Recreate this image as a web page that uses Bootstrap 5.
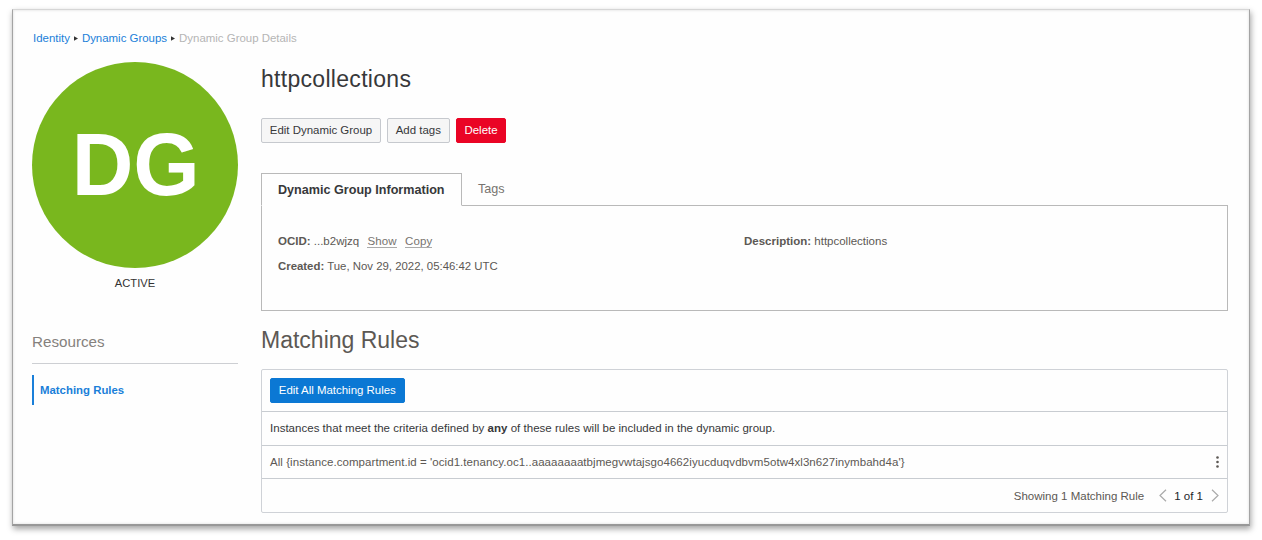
<!DOCTYPE html>
<html lang="en">
<head>
<meta charset="utf-8">
<meta name="viewport" content="width=device-width, initial-scale=1">
<title>Dynamic Group Details</title>
<link rel="stylesheet" href="https://cdn.jsdelivr.net/npm/bootstrap@5.3.0/dist/css/bootstrap.min.css">
<style>
  body { font-family: "Liberation Sans", Arial, sans-serif; font-size: 11.5px; line-height: 16px; color: #5c5854; background: #fff; overflow: hidden; min-height: 100vh; padding: 9px 0 0 12px; }
  a { color: #1a7fd9; text-decoration: none; }
  .frame { width: 1238px; height: 517px; padding: 20px 21px 0 19px; background: #fefefe;
    border: 1px solid #a4a4a4; border-top-color: #d6d6d6; border-bottom: 2px solid #989898;
    box-shadow: 1px 3px 6px rgba(0,0,0,.36), inset 0 0 2px 1px #ececec; }
  .crumbs { height: 16px; font-size: 11.45px; padding-left: 1px; }
  .crumb-dot { width: 12px; display: flex; align-items: center; justify-content: center; }
  .muted-crumb { color: #b5b5b5; }
  .side { width: 206px; padding-top: 16px; }
  .main-col { width: 967px; padding-top: 16px; }
  .avatar { width: 206px; height: 206px; background: #79b71e; color: #fff; font-size: 89px; line-height: 1; font-weight: 700; }
  .avatar span { transform: scaleX(.96); margin: -2px 0 0 2px; }
  .status { color: #333; margin-top: 7px; font-size: 11.2px; }
  .res-title { font-size: 15.2px; line-height: 20px; color: #85817d; margin-top: 41px; padding: 0 0 11px 0; border-bottom: 1px solid #cdcfd3; }
  .res-link { height: 30px; margin-top: 11px; padding-left: 6px; border-left: 2px solid #1a7fd9; font-weight: 700; font-size: 11.4px; }
  h1 { font-size: 23px; line-height: 28px; margin: 3px 0 0; color: #37383a; font-weight: 400; letter-spacing: .3px; }
  h2 { font-size: 23px; line-height: 28px; margin: 15px 0 0; color: #5c5854; font-weight: 400; }
  .actions { margin-top: 25px; gap: 6px; }
  .btn { --bs-btn-font-size: 11.45px; --bs-btn-line-height: 16px; --bs-btn-padding-x: 7.8px; --bs-btn-border-radius: 2px; padding-bottom: 4px; padding-top: 3px; }
  .btn-plain { --bs-btn-bg: #f6f6f6; --bs-btn-border-color: #c6c9ce; --bs-btn-color: #37383a; }
  .btn-danger { --bs-btn-bg: #ea0425; --bs-btn-border-color: #ea0425; }
  .btn-primary { --bs-btn-bg: #0b78d4; --bs-btn-border-color: #0b78d4; }
  .nav-tabs { --bs-nav-tabs-border-color: #b9b9b9; --bs-nav-tabs-border-radius: 0; --bs-nav-tabs-link-active-color: #37383a;
    --bs-nav-tabs-link-active-border-color: #b9b9b9 #b9b9b9 #fefefe; --bs-nav-tabs-link-active-bg: #fefefe; --bs-nav-link-color: #77736f;
    font-size: 12.6px; margin-top: 30px; height: 33px; }
  .nav-tabs .nav-link { height: 33px; line-height: 16px; padding: 7px 15px; }
  .nav-tabs .nav-link.active { font-weight: 700; width: 201px; padding: 8px 16px; white-space: nowrap; }
  .info { height: 105px; border: 1px solid #b9b9b9; border-top: 0; padding: 27px 16px 0; }
  .info-row { height: 25px; }
  .info-half { width: 466px; }
  .created { font-size: 11.4px; }
  .info a { color: #77736f; border-bottom: 1px solid #aaa; line-height: 12px; display: inline-block; letter-spacing: .15px; margin-left: 5px; }
  .rules { height: 144px; margin-top: 15px; border: 1px solid #cfd2d7; border-radius: 2px; }
  .rules > div { padding: 0 8px 1px; border-bottom: 1px solid #c8ccd1; height: 33px; }
  .rules > div:last-child { border-bottom: 0; padding-bottom: 0; }
  .rules .bar { height: 42px; padding-bottom: 1px; }
  .rules .intro { height: 34px; color: #37383a; letter-spacing: .02px; }
  .rule-text { letter-spacing: .06px; }
</style>
</head>
<body>
<div class="frame">
  <nav class="crumbs d-flex" aria-label="breadcrumb">
    <a href="#">Identity</a><span class="crumb-dot"><svg width="4" height="5" viewBox="0 0 4 5" fill="#333"><path d="M0 .3 4 2.5 0 4.7z"/></svg></span><a href="#">Dynamic Groups</a><span class="crumb-dot"><svg width="4" height="5" viewBox="0 0 4 5" fill="#333"><path d="M0 .3 4 2.5 0 4.7z"/></svg></span><span class="muted-crumb">Dynamic Group Details</span>
  </nav>
  <div class="d-flex justify-content-between">
    <aside class="side">
      <div class="avatar rounded-circle d-flex align-items-center justify-content-center"><span>DG</span></div>
      <div class="status text-center">ACTIVE</div>
      <div class="res-title">Resources</div>
      <div class="res-link d-flex align-items-center"><a href="#">Matching Rules</a></div>
    </aside>
    <main class="main-col">
      <h1>httpcollections</h1>
      <div class="actions d-flex">
        <button class="btn btn-plain">Edit Dynamic Group</button>
        <button class="btn btn-plain">Add tags</button>
        <button class="btn btn-danger">Delete</button>
      </div>
      <ul class="nav nav-tabs">
        <li class="nav-item"><a class="nav-link active" href="#">Dynamic Group Information</a></li>
        <li class="nav-item"><a class="nav-link" href="#">Tags</a></li>
      </ul>
      <section class="info">
        <div class="info-row d-flex">
          <div class="info-half"><b>OCID:</b> ...b2wjzq <a href="#">Show</a> <a href="#">Copy</a></div>
          <div><b>Description:</b> httpcollections</div>
        </div>
        <div class="info-row created"><b>Created:</b> Tue, Nov 29, 2022, 05:46:42 UTC</div>
      </section>
      <h2>Matching Rules</h2>
      <section class="rules">
        <div class="bar d-flex align-items-center"><button class="btn btn-primary">Edit All Matching Rules</button></div>
        <div class="intro d-flex align-items-center"><span>Instances that meet the criteria defined by <b>any</b> of these rules will be included in the dynamic group.</span></div>
        <div class="d-flex align-items-center justify-content-between"><span class="rule-text">All {instance.compartment.id = 'ocid1.tenancy.oc1..aaaaaaaatbjmegvwtajsgo4662iyucduqvdbvm5otw4xl3n627inymbahd4a'}</span>
          <svg width="3" height="12" viewBox="0 0 3 12" fill="#5c5854"><circle cx="1.5" cy="1.5" r="1.3"/><circle cx="1.5" cy="6" r="1.3"/><circle cx="1.5" cy="10.5" r="1.3"/></svg></div>
        <div class="d-flex align-items-center justify-content-end"><span>Showing 1 Matching Rule</span>
          <svg class="flex-shrink-0" style="margin:0 7px 0 15px" width="8" height="13" viewBox="0 0 8 13" fill="none" stroke="#aaa" stroke-width="1.2"><path d="M7 .7 1 6.5l6 5.8"/></svg>
          <span class="text-dark">1 of 1</span>
          <svg style="margin-left:8px" width="8" height="13" viewBox="0 0 8 13" fill="none" stroke="#aaa" stroke-width="1.2"><path d="m1 .7 6 5.8-6 5.8"/></svg></div>
      </section>
    </main>
  </div>
</div>
<script src="https://cdn.jsdelivr.net/npm/bootstrap@5.3.0/dist/js/bootstrap.bundle.min.js"></script>
</body>
</html>
